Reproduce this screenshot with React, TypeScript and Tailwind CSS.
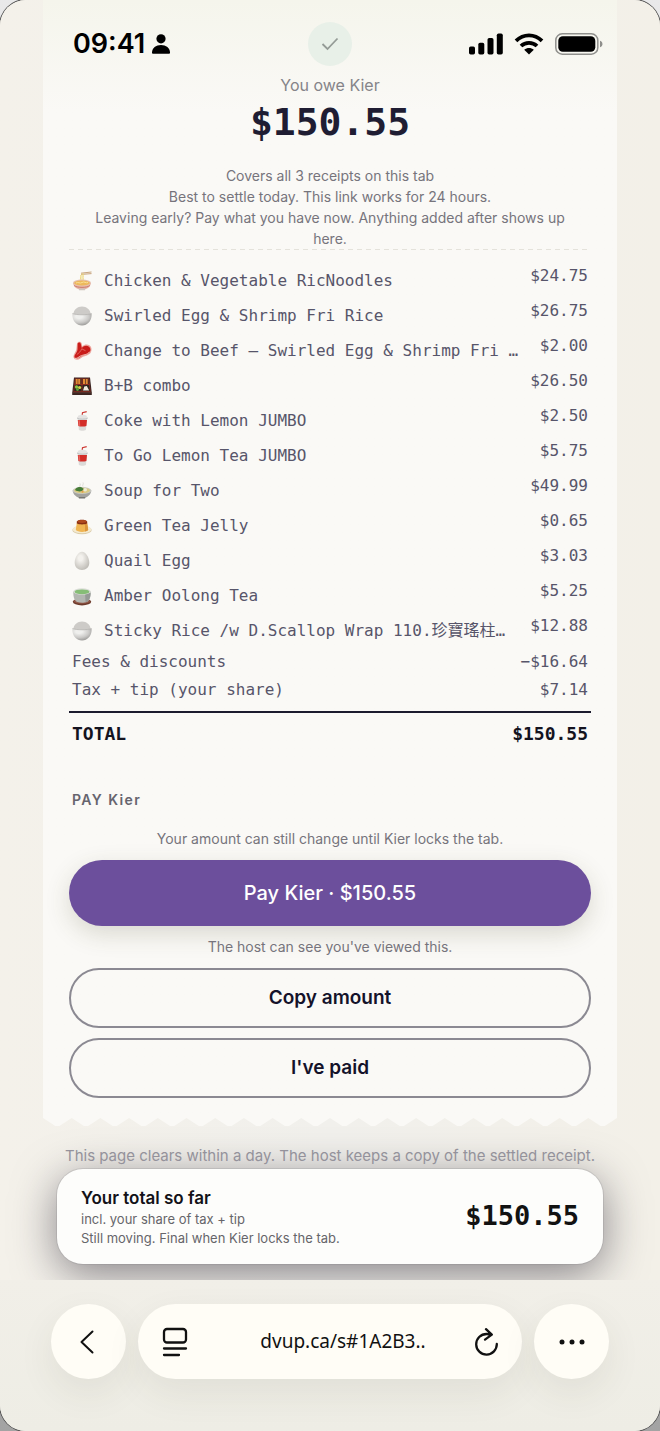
import type { ReactNode } from 'react'

type Item = { icon: ReactNode; name: string; price: string }

function Noodles() {
  return (
    <svg viewBox="0 0 20 20" className="w-5 h-5">
      <path d="M9 2.2 19.5 1M9 3.4 19.5 2.6" stroke="#b98b5c" strokeWidth="0.8" />
      <path d="M10 2.5v8M11.2 2.4c.3 3-.6 5 .8 8M8.8 4c-.5 2 .2 4-1 6" stroke="#ecd77c" strokeWidth="0.9" fill="none" />
      <path d="M1 12c.5 3.500 3 5.500 6 6.200h6c3-.700 5.500-2.700 6-6.200z" fill="#e7b3a4" />
      <path d="M6.500 17.500h7l-.6 1.700H7.100z" fill="#cfc5bd" />
      <ellipse cx="10" cy="12" rx="9" ry="3.400" fill="#e6c0b0" />
      <ellipse cx="10" cy="12" rx="7.800" ry="2.500" fill="#edb85c" />
      <path d="M4 12c2-1.500 4 1 6-.5s4 1 6 0" stroke="#f9df94" fill="none" />
      <path d="M2 14.500c3 2.500 13 2.500 16 0" stroke="#c56f61" strokeWidth="0.8" fill="none" />
    </svg>
  )
}

function Rice() {
  return (
    <svg viewBox="0 0 20 20" className="w-5 h-5">
      <defs>
        <radialGradient id="bowl" cx="0.35" cy="0.25" r="0.85">
          <stop offset="0.2" stopColor="#efefed" />
          <stop offset="0.6" stopColor="#cbcac8" />
          <stop offset="1" stopColor="#8f8e8c" />
        </radialGradient>
      </defs>
      <path d="M1.200 9C1.500 3.500 5.500.6 10 .6s8.500 2.900 8.800 8.400z" fill="#cdcbc8" />
      <path d="M.4 7.500c4 1.700 15.200 1.700 19.200 0 .5 6-2.500 9.700-5.800 11.300-2 .8-5.600.8-7.600 0C2.900 17.200-.1 13.500.4 7.500z" fill="url(#bowl)" />
      <path d="M.5 7.500c4 1.700 15 1.700 19 0" stroke="#b3b2af" strokeWidth="0.7" fill="none" />
    </svg>
  )
}

function Meat() {
  return (
    <svg viewBox="0 0 20 20" className="w-5 h-5">
      <path d="M5 2.500c1-2.300 4-2.500 4.800.2l.6 2.800c2-2.300 5-2.500 7.300-1 2.600 2 2.300 6.500-.3 8.600-3.500 2.600-6 1.800-9 4.500-2.500 2-6 1.500-6.800-1C.8 13.800 3.500 12 4.300 8.500z" fill="#eda39b" />
      <path d="M5.700 2.500c.8-1.600 2.700-1.300 3.100.4l1 4c2-2.400 5-2.700 7.200-1.200 2.100 1.700 1.800 5-.4 6.500-3 2.200-6 1.500-9.300 4.400-2 1.500-4.500 1.200-4.800-.5C2.200 13.500 5.100 12 5.500 8.500z" fill="#c91c1a" />
      <path d="M9.800 7.500c-1 3-3 4.700-5 6M10 8l3.500 1.700" stroke="#ea8278" strokeWidth="0.7" fill="none" />
      <path d="M2.800 17.300c2.500.5 3.800-1.300 5.500-2.200 3-1.500 7-1 9.500-4.500" stroke="#f4d0c6" strokeWidth="0.9" fill="none" />
    </svg>
  )
}

function Bento() {
  return (
    <svg viewBox="0 0 20 20" className="w-5 h-5">
      <path d="M2 1.500h16l1.800 15.500v2H.2v-2z" fill="#3a2521" />
      <path d="M2.800 2.400h14.400l1.400 13.400H1.400z" fill="#8d2b20" />
      <path d="M3.500 3h6v5H3zM10.500 3h6l.5 5h-6.500z" fill="#4a2c22" />
      <path d="M4.700 3v5M7.200 3v5M12 3v5M14.700 3v5" stroke="#e58a36" strokeWidth="2" />
      <path d="M2.800 9h6.700v6H2.200zM10.500 9h6.700l.6 6h-7.300z" fill="#2c2620" />
      <circle cx="4.500" cy="11" r="1.700" fill="#8cc247" />
      <circle cx="7.600" cy="11.500" r="1.600" fill="#d2d34b" />
      <circle cx="5.500" cy="13.600" r="1.400" fill="#5ea33b" />
      <path d="m11 14.400 1.300-4 2.500-.5 2.400 4.500z" fill="#efe7dc" />
      <path d="M.5 16.700h19" stroke="#6d423b" strokeWidth="0.6" />
    </svg>
  )
}

function Cup() {
  return (
    <svg viewBox="0 0 20 20" className="w-5 h-5">
      <path d="M10 5.500 10.500 1.700 14.700.6" stroke="#ce3a35" strokeWidth="1.200" fill="none" />
      <path d="M5.500 6h9.800l-1.400 13c-1.500 1-5.500 1-7 0z" fill="#dcdad8" />
      <path d="M5.800 9h9.200l-.6 6c-2 .7-6 .7-8 0z" fill="#d32d28" />
      <path d="M6.300 9.300h1.500l.5 5.700-1.400-.2z" fill="#e8615a" />
      <path d="M6.400 4.500c2-1 6-1 8 0l1.400 2.700c-3 1.300-7.800 1.300-10.800 0z" fill="#e4e3e2" />
      <path d="M5 7.200c3 1.200 7.800 1.200 10.800 0" stroke="#aeb2b4" strokeWidth="0.6" fill="none" />
    </svg>
  )
}

function Soup() {
  return (
    <svg viewBox="0 0 20 20" className="w-5 h-5">
      <path d="M8 6c-1-1.500 1-2 0-3.500M11 5.500c-1-1.500 1-2.500 0-4" stroke="#d9d8d2" strokeWidth="0.9" fill="none" />
      <path d="M.6 9.500c.7 4.300 3.400 6.300 6 7h6.800c2.600-.7 5.300-2.700 6-7z" fill="#a2a29e" />
      <path d="M6.500 16h7l-.5 1.400H7z" fill="#777773" />
      <ellipse cx="10" cy="9.500" rx="9.400" ry="3.600" fill="#c9c9c3" />
      <ellipse cx="10" cy="9.500" rx="8" ry="2.700" fill="#d9ca83" />
      <path d="M3 9c1.500-3 3.500-2.600 5-3 1.800-.3 2.500 1.500 4 2-1.500 2.500-5 3.500-9 1z" fill="#467d38" />
      <circle cx="13.200" cy="8.800" r="1.800" fill="#f0ead5" />
      <circle cx="10.500" cy="10.800" r="1" fill="#e69a4d" />
    </svg>
  )
}

function Custard() {
  return (
    <svg viewBox="0 0 20 20" className="w-5 h-5">
      <ellipse cx="10" cy="14" rx="9.700" ry="4.300" fill="#d9cba9" />
      <ellipse cx="10" cy="13.500" rx="9.300" ry="3.800" fill="#f4ead0" />
      <path d="m5 5.500-1.200 8.300c1.500 2.800 10.900 2.800 12.400 0L15 5.500z" fill="#f0b552" />
      <path d="M13 7.500h2.200l1 6.300c-.6 1-1.700 1.500-3.200 1.800z" fill="#dc953c" />
      <path d="M5 5.500c1-2.300 9-2.300 10 0l.3 1.700c-2 1.600-8.600 1.600-10.600 0z" fill="#8a2f12" />
      <ellipse cx="10" cy="5.500" rx="4.500" ry="1.400" fill="#b04a1f" />
    </svg>
  )
}

function Egg() {
  return (
    <svg viewBox="0 0 20 20" className="w-5 h-5">
      <defs>
        <radialGradient id="shell" cx="0.4" cy="0.35" r="0.7">
          <stop offset="0.2" stopColor="#f3f1ed" />
          <stop offset="1" stopColor="#bdbab4" />
        </radialGradient>
      </defs>
      <path d="M10 .8c4 0 7.300 6 7.300 11 0 4.500-3.200 7.200-7.300 7.200s-7.300-2.700-7.300-7.200c0-5 3.300-11 7.300-11z" fill="url(#shell)" />
    </svg>
  )
}

function Tea() {
  return (
    <svg viewBox="0 0 20 20" className="w-5 h-5">
      <ellipse cx="10" cy="15.800" rx="9.200" ry="3.600" fill="#6d3a2b" />
      <ellipse cx="10" cy="15.200" rx="8" ry="2.600" fill="#93594a" />
      <path d="M1.300 5.500c0 6 1 9 4 10.600 2.500 1 6.900 1 9.400 0 3-1.600 4-4.600 4-10.600z" fill="#b3b6b1" />
      <path d="M13 7h5.600c-.2 5-1.400 8-5 9.400z" fill="#969a96" />
      <ellipse cx="10" cy="5.500" rx="8.700" ry="3.300" fill="#dcded9" />
      <ellipse cx="10" cy="5.800" rx="7.400" ry="2.400" fill="#86bd76" />
    </svg>
  )
}

const items: Item[] = [
  { icon: <Noodles />, name: 'Chicken & Vegetable RicNoodles', price: '$24.75' },
  { icon: <Rice />, name: 'Swirled Egg & Shrimp Fri Rice', price: '$26.75' },
  { icon: <Meat />, name: 'Change to Beef — Swirled Egg & Shrimp Fri …', price: '$2.00' },
  { icon: <Bento />, name: 'B+B combo', price: '$26.50' },
  { icon: <Cup />, name: 'Coke with Lemon JUMBO', price: '$2.50' },
  { icon: <Cup />, name: 'To Go Lemon Tea JUMBO', price: '$5.75' },
  { icon: <Soup />, name: 'Soup for Two', price: '$49.99' },
  { icon: <Custard />, name: 'Green Tea Jelly', price: '$0.65' },
  { icon: <Egg />, name: 'Quail Egg', price: '$3.03' },
  { icon: <Tea />, name: 'Amber Oolong Tea', price: '$5.25' },
  { icon: <Rice />, name: 'Sticky Rice /w D.Scallop Wrap 110.珍寶瑤柱…', price: '$12.88' },
]

const fees = [
  { label: 'Fees & discounts', amount: '−$16.64' },
  { label: 'Tax + tip (your share)', amount: '$7.14' },
]

const mono = "font-['DejaVu_Sans_Mono','Noto_Sans_CJK_TC',monospace]"

// 20 teeth across the torn edge, 28 units wide each
const teeth = 'M0 0' + Array.from({ length: 20 }, (_, i) => `L${i * 28 + 12} 8L${i * 28 + 16} 8L${i * 28 + 28} 0`).join('') + 'Z'

function StatusBar() {
  return (
    <header className="grid grid-cols-[1fr_auto_1fr] items-center pt-[22px]">
      <div className="flex items-center gap-[7px] pl-[30px]">
        <span className="font-['Inter',sans-serif] text-[27px] leading-8 font-semibold text-black">09:41</span>
        <svg viewBox="0 0 18 20" className="w-[18px] h-5">
          <circle cx="9" cy="4.800" r="4.600" fill="#000" />
          <path d="M0 18.500C0 14 4 11 9 11s9 3 9 7.500c0 .8-.5 1.300-1.200 1.300H1.200C.5 19.800 0 19.300 0 18.500z" fill="#000" />
        </svg>
      </div>
      <div className="flex items-center justify-center w-11 h-11 rounded-full bg-[#e8f0e8]">
        <svg viewBox="0 0 18 14" className="w-[18px] h-[14px]">
          <path d="m1.500 7 5 5L16.500 1.500" fill="none" stroke="#949b96" strokeWidth="1.800" />
        </svg>
      </div>
      <div className="flex items-center justify-end gap-[11px] pr-[14px]">
        <svg viewBox="0 0 34 22" className="w-[34px] h-[22px]">
          <rect x="0" y="13.500" width="6" height="8" rx="1.700" />
          <rect x="9.300" y="9.800" width="6" height="11.700" rx="1.700" />
          <rect x="18.500" y="5" width="6" height="16.500" rx="1.700" />
          <rect x="27.800" y="0.500" width="6" height="21" rx="1.700" />
        </svg>
        <svg viewBox="0 0 30 22" className="w-[30px] h-[22px]">
          <path d="M2 7.800C9.500.5 20.500.5 28 7.800M7 13c4.500-4.300 11.500-4.300 16 0" fill="none" stroke="#000" strokeWidth="3.800" />
          <path d="M10.200 16.700c2.800-2.400 6.800-2.400 9.600 0L15 21.600z" />
        </svg>
        <svg viewBox="0 0 48 22" className="w-12 h-[22px]">
          <rect x="0.800" y="0.800" width="42" height="20.400" rx="6.500" fill="none" stroke="#8f8f8c" strokeWidth="1.500" />
          <rect x="3.300" y="3.300" width="37" height="15.400" rx="4.500" />
          <path d="M45 7.800c3.300 1 3.300 5.400 0 6.400z" fill="#8f8f8c" />
        </svg>
      </div>
    </header>
  )
}

function Receipt() {
  return (
    <table className={`w-full table-fixed text-base text-[#57556a] ${mono}`}>
      <colgroup>
        <col />
        <col className="w-[84px]" />
      </colgroup>
      <tbody>
        {items.map((item) => (
          <tr key={item.name}>
            <td className="h-[35px] p-0 pl-[3px] align-middle">
              <div className="flex items-center gap-3 whitespace-nowrap">
                <span className="shrink-0">{item.icon}</span>
                <span>{item.name}</span>
              </div>
            </td>
            <td className="p-0 pr-[3px] text-right align-top leading-[25px]">{item.price}</td>
          </tr>
        ))}
        {fees.map((fee) => (
          <tr key={fee.label} className="leading-7">
            <td className="p-0 pl-[3px]">{fee.label}</td>
            <td className="p-0 pr-[3px] text-right">{fee.amount}</td>
          </tr>
        ))}
        <tr aria-hidden="true">
          <td colSpan={2} className="h-2 p-0" />
        </tr>
      </tbody>
      <tfoot className="border-t-2 border-[#1c1b2e] text-lg font-bold text-[#14131f]">
        <tr className="leading-[42px]">
          <td className="p-0 pl-[3px]">TOTAL</td>
          <td className="p-0 pr-[3px] text-right">$150.55</td>
        </tr>
      </tfoot>
    </table>
  )
}

function BrowserBar() {
  return (
    <nav className="flex gap-3 px-[51px] pt-6 pb-[52px] bg-linear-to-b from-[#f1efe8] to-[#eeede5]">
      <button aria-label="Back" className="flex items-center justify-center w-[75px] h-[75px] shrink-0 rounded-full bg-[#fffdf6] shadow-[0_14px_36px_rgba(60,60,40,0.08)]">
        <svg viewBox="0 0 14 24" className="w-[14px] h-6 mr-1">
          <path d="M12.500 1.500 1.500 12l11 10.500" fill="none" stroke="#111" strokeWidth="2" strokeLinecap="round" strokeLinejoin="round" />
        </svg>
      </button>
      <div className="flex flex-1 items-center h-[75px] min-w-0 px-6 rounded-full bg-[#fffdf6] shadow-[0_14px_36px_rgba(60,60,40,0.08)]">
        <button aria-label="Page settings">
          <svg viewBox="0 0 26 30" className="w-[26px] h-[30px]" fill="none" stroke="#111" strokeWidth="2.300" strokeLinecap="round">
            <rect x="2" y="2" width="22" height="13.500" rx="3" />
            <path d="M2 21.500h22M2 28h15" />
          </svg>
        </button>
        <input
          aria-label="Address"
          defaultValue="dvup.ca/s#1A2B3.."
          className="flex-1 min-w-0 pl-6 bg-transparent text-center font-['Noto_Sans',sans-serif] text-[19px] text-[#111] outline-none"
        />
        <button aria-label="Reload">
          <svg viewBox="0 0 24 28" className="w-6 h-7" fill="none" stroke="#111" strokeWidth="2.300" strokeLinecap="round" strokeLinejoin="round">
            <path d="M17.500 6.600C16 6.200 14 6 12.500 6A10.300 10.300 0 1 0 22.800 16M12 1.200 17.800 6.600 11 11.600" />
          </svg>
        </button>
      </div>
      <button aria-label="More" className="flex items-center justify-center w-[75px] h-[75px] shrink-0 rounded-full bg-[#fffdf6] shadow-[0_14px_36px_rgba(60,60,40,0.08)]">
        <svg viewBox="0 0 26 6" className="w-[26px] h-[6px]" fill="#111">
          <circle cx="3" cy="3" r="2.500" />
          <circle cx="13" cy="3" r="2.500" />
          <circle cx="23" cy="3" r="2.500" />
        </svg>
      </button>
    </nav>
  )
}

export default function App() {
  return (
    <div className="overflow-hidden bg-linear-to-b from-[#e9e9ea] to-[#a3a3a3] font-['Inter',sans-serif]">
      <div className="overflow-hidden rounded-[26px] bg-[#f3f0ea] shadow-[0_0_0_1px_#555]">
        <main className="overflow-hidden px-[43px] pb-4 bg-linear-to-r from-[#f4f1ea] via-[#f1f0ec] to-[#f3f0e8]">
          <div className="bg-[#faf9f6] bg-linear-to-b from-[#f5f5ec] to-[#faf9f6] to-10%">
            <StatusBar />
            <div className="px-[26px] pt-[7px] pb-5">
              <section className="text-center">
                <p className="text-base leading-6 text-[#858489]">You owe Kier</p>
                <h1 className={`text-[38px] leading-[50px] font-bold text-[#1f1d33] ${mono}`}>$150.55</h1>
                <div className="pt-[18px] text-sm leading-[21px] text-[#76747c]">
                  <p>Covers all 3 receipts on this tab</p>
                  <p>Best to settle today. This link works for 24 hours.</p>
                  <p>
                    Leaving early? Pay what you have now. Anything added after shows up
                    <br />
                    here.
                  </p>
                </div>
              </section>
              <div className="mb-[13px] h-px bg-[repeating-linear-gradient(to_right,#e4e2db_0_5px,transparent_5px_9px)]" />
              <Receipt />
              <h2 className="pt-[35px] pl-[3px] text-sm leading-5 font-semibold tracking-widest text-[#66646e]">PAY Kier</h2>
              <p className="pt-[19px] pb-[11px] text-center text-sm leading-5 text-[#76747c]">
                Your amount can still change until Kier locks the tab.
              </p>
              <button className="w-full h-[66px] rounded-full bg-[#6c4f9c] text-xl font-medium text-white shadow-[0_8px_24px_rgba(70,70,40,0.18)]">
                Pay Kier · $150.55
              </button>
              <p className="py-[11px] text-center text-sm leading-5 text-[#76747c]">The host can see you&apos;ve viewed this.</p>
              <div className="flex flex-col gap-[10px]">
                <button className="w-full h-[60px] rounded-full border-2 border-[#8b8992] text-[19px] font-semibold text-[#14122a]">Copy amount</button>
                <button className="w-full h-[60px] rounded-full border-2 border-[#8b8992] text-[19px] font-semibold text-[#14122a]">I&apos;ve paid</button>
              </div>
            </div>
          </div>
          <svg viewBox="0 0 560 8" preserveAspectRatio="none" className="block w-full h-2">
            <path d={teeth} fill="#faf9f6" />
          </svg>
          <p className="pt-5 pb-[3px] text-center text-[15px] leading-5 whitespace-nowrap text-[#94929b]">
            This page clears within a day. The host keeps a copy of the settled receipt.
          </p>
          <aside className="flex items-center justify-between mx-[14px] h-[95px] px-6 rounded-[26px] bg-[#fdfdfb] shadow-[0_0_0_1px_rgba(120,118,125,0.2),0_10px_44px_rgba(40,36,48,0.54)]">
            <div>
              <p className="text-[17px] leading-6 font-semibold text-[#131218]">Your total so far</p>
              <p className="text-[13px] leading-[19px] text-[#66656a]">incl. your share of tax + tip</p>
              <p className="text-[13px] leading-[19px] text-[#66656a]">Still moving. Final when Kier locks the tab.</p>
            </div>
            <strong className={`text-[27px] font-bold text-[#121212] ${mono}`}>$150.55</strong>
          </aside>
        </main>
        <BrowserBar />
      </div>
    </div>
  )
}
